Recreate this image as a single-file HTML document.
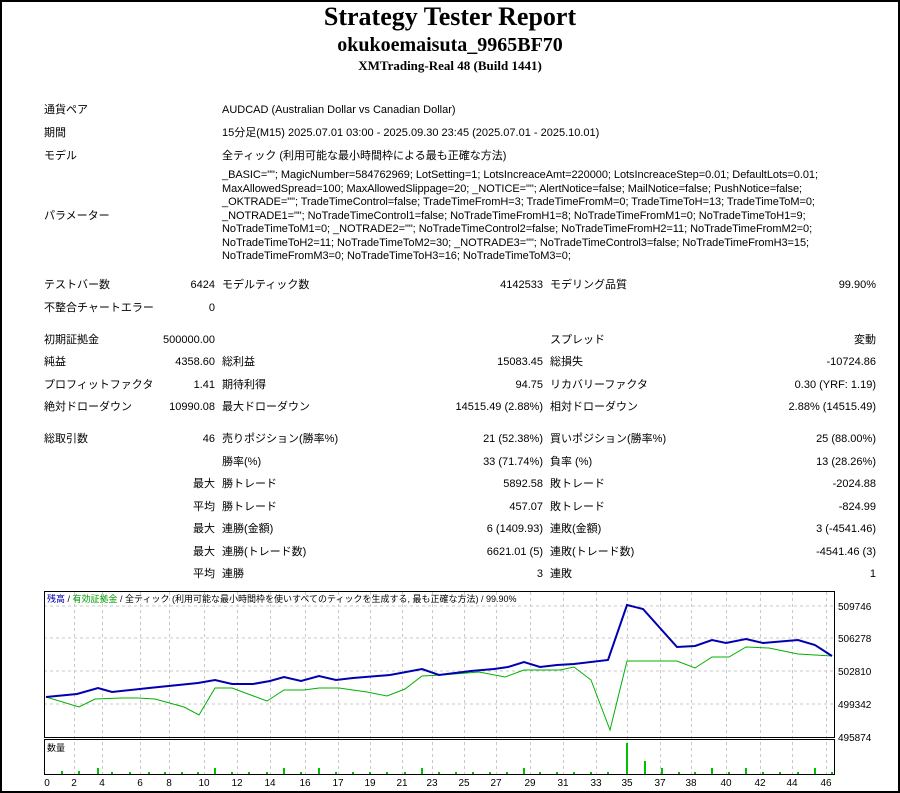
<!DOCTYPE html>
<html><head><meta charset="utf-8"><style>
*{margin:0;padding:0}
body{width:900px;height:793px;background:#fff;position:relative;overflow:hidden;font-family:"Liberation Sans","Noto Sans CJK JP",sans-serif;font-size:11px;color:#000}
#frame{position:absolute;left:0;top:0;width:896px;height:789px;border:2px solid #000}
.t{position:absolute;line-height:14px;white-space:nowrap}
.r{text-align:right}
.h{position:absolute;left:0;width:900px;text-align:center;font-family:"Liberation Serif",serif;font-weight:bold;white-space:nowrap}
</style></head><body>
<div id="frame"></div>
<div class="h" style="top:2px;font-size:26px;line-height:30px">Strategy Tester Report</div>
<div class="h" style="top:33px;font-size:20px;line-height:24px">okukoemaisuta_9965BF70</div>
<div class="h" style="top:58px;font-size:13px;line-height:15px">XMTrading-Real 48 (Build 1441)</div>

<div class="t" style="left:44px;top:103px">通貨ペア</div><div class="t" style="left:222px;top:103px">AUDCAD (Australian Dollar vs Canadian Dollar)</div>
<div class="t" style="left:44px;top:126px">期間</div><div class="t" style="left:222px;top:126px">15分足(M15) 2025.07.01 03:00 - 2025.09.30 23:45 (2025.07.01 - 2025.10.01)</div>
<div class="t" style="left:44px;top:149px">モデル</div><div class="t" style="left:222px;top:149px">全ティック (利用可能な最小時間枠による最も正確な方法)</div>
<div class="t" style="left:44px;top:209px">パラメーター</div>
<div class="t" style="left:222px;top:169px;line-height:13.5px;letter-spacing:-0.05px">_BASIC=""; MagicNumber=584762969; LotSetting=1; LotsIncreaceAmt=220000; LotsIncreaceStep=0.01; DefaultLots=0.01;<br>MaxAllowedSpread=100; MaxAllowedSlippage=20; _NOTICE=""; AlertNotice=false; MailNotice=false; PushNotice=false;<br>_OKTRADE=""; TradeTimeControl=false; TradeTimeFromH=3; TradeTimeFromM=0; TradeTimeToH=13; TradeTimeToM=0;<br>_NOTRADE1=""; NoTradeTimeControl1=false; NoTradeTimeFromH1=8; NoTradeTimeFromM1=0; NoTradeTimeToH1=9;<br>NoTradeTimeToM1=0; _NOTRADE2=""; NoTradeTimeControl2=false; NoTradeTimeFromH2=11; NoTradeTimeFromM2=0;<br>NoTradeTimeToH2=11; NoTradeTimeToM2=30; _NOTRADE3=""; NoTradeTimeControl3=false; NoTradeTimeFromH3=15;<br>NoTradeTimeFromM3=0; NoTradeTimeToH3=16; NoTradeTimeToM3=0;</div>

<div id="stats"></div>
<script>
var rows=[
[278,"テストバー数","6424","モデルティック数","4142533","モデリング品質","99.90%"],
[301,"不整合チャートエラー","0","","","",""],
[333,"初期証拠金","500000.00","","","スプレッド","変動"],
[355,"純益","4358.60","総利益","15083.45","総損失","-10724.86"],
[378,"プロフィットファクタ","1.41","期待利得","94.75","リカバリーファクタ","0.30 (YRF: 1.19)"],
[400,"絶対ドローダウン","10990.08","最大ドローダウン","14515.49 (2.88%)","相対ドローダウン","2.88% (14515.49)"],
[432,"総取引数","46","売りポジション(勝率%)","21 (52.38%)","買いポジション(勝率%)","25 (88.00%)"],
[455,"","","勝率(%)","33 (71.74%)","負率 (%)","13 (28.26%)"],
[477,"","最大","勝トレード","5892.58","敗トレード","-2024.88"],
[500,"","平均","勝トレード","457.07","敗トレード","-824.99"],
[522,"","最大","連勝(金額)","6 (1409.93)","連敗(金額)","3 (-4541.46)"],
[545,"","最大","連勝(トレード数)","6621.01 (5)","連敗(トレード数)","-4541.46 (3)"],
[567,"","平均","連勝","3","連敗","1"]];
var h="";
rows.forEach(function(r){var y=r[0];
h+='<div class="t" style="left:44px;top:'+y+'px">'+r[1]+'</div>';
h+='<div class="t r" style="left:100px;width:115px;top:'+y+'px">'+r[2]+'</div>';
h+='<div class="t" style="left:222px;top:'+y+'px">'+r[3]+'</div>';
h+='<div class="t r" style="left:400px;width:143px;top:'+y+'px">'+r[4]+'</div>';
h+='<div class="t" style="left:550px;top:'+y+'px">'+r[5]+'</div>';
h+='<div class="t r" style="left:700px;width:176px;top:'+y+'px">'+r[6]+'</div>';});
document.getElementById("stats").innerHTML=h;
</script>

<svg style="position:absolute;left:0;top:0" width="900" height="793">
<g stroke="#c8c8c8" stroke-dasharray="3,3" stroke-width="1">
<line x1="44" y1="606" x2="834" y2="606"/><line x1="44" y1="638" x2="834" y2="638"/><line x1="44" y1="671" x2="834" y2="671"/><line x1="44" y1="704" x2="834" y2="704"/>
<g id="vg"></g>
</g>
<rect x="44.5" y="591.5" width="790" height="146" fill="none" stroke="#000"/>
<rect x="44.5" y="739.5" width="790" height="35" fill="none" stroke="#000"/>
<polyline fill="none" stroke="#00b000" stroke-width="1" points="46,697 79,707 95,699 121,698 138,698 155,699 184,707 199,715 215,688 232,688 267,701 284,690 304,690 319,688 339,688 367,692 387,696 405,689 422,676 442,675 479,672 505,677 524,670 560,670 574,667 591,680 610,730 627,661 677,661 695,668 712,657 729,657 746,647 769,648 798,654 832,656"/>
<polyline fill="none" stroke="#0000b0" stroke-width="2" points="46,697 77,694 98,688 112,692 149,688 198,683 215,680 232,684 253,684 270,681 284,677 301,681 319,676 336,680 353,678 390,675 422,669 439,675 471,671 494,669 508,667 524,662 540,667 557,665 574,664 608,660 627,605 643,609 677,647 695,646 712,640 726,643 746,639 763,643 798,640 815,645 832,656"/>
<g fill="#00c000" id="vb"></g>
<g font-family="Liberation Sans,sans-serif" font-size="10" fill="#000">
<text x="838" y="610">509746</text><text x="838" y="642">506278</text><text x="838" y="675">502810</text><text x="838" y="708">499342</text><text x="838" y="741">495874</text>
<g id="xl" text-anchor="middle"></g>
</g>
<text x="47" y="602" font-size="9" font-family="Liberation Sans,Noto Sans CJK JP,sans-serif"><tspan fill="#0000b0">残高</tspan> / <tspan fill="#00a000">有効証拠金</tspan> / 全ティック (利用可能な最小時間枠を使いすべてのティックを生成する, 最も正確な方法) / 99.90%</text>
<text x="47" y="751" font-size="9" font-family="Liberation Sans,Noto Sans CJK JP,sans-serif">数量</text>
</svg>
<script>
var xs=[[0,47],[2,74],[4,102],[6,140],[8,169],[10,204],[12,237],[14,270],[16,305],[17,338],[19,370],[21,402],[23,432],[25,464],[27,496],[29,530],[31,563],[33,596],[35,627],[37,660],[38,691],[40,726],[42,760],[44,792],[46,826]];
var g="",l="";
xs.forEach(function(a){if(a[1]>50&&a[1]<830)g+='<line x1="'+(a[1]+0.5)+'" y1="592" x2="'+(a[1]+0.5)+'" y2="774"/>';l+='<text x="'+a[1]+'" y="786">'+a[0]+'</text>';});
document.getElementById("vg").innerHTML=g;document.getElementById("xl").innerHTML=l;
var vb=[[62,3],[79,3],[98,6],[112,2],[130,2],[149,2],[165,2],[182,2],[198,2],[215,6],[232,2],[249,2],[267,2],[284,6],[301,2],[319,6],[336,2],[353,2],[370,2],[387,2],[405,2],[422,6],[439,2],[456,2],[473,2],[490,2],[507,2],[524,6],[540,2],[557,2],[574,2],[591,2],[608,2],[627,31],[645,13],[662,6],[679,2],[695,2],[712,6],[729,2],[746,6],[763,2],[780,2],[798,2],[815,6],[832,2]];
var b="";vb.forEach(function(v){b+='<rect x="'+(v[0]-1)+'" y="'+(774-v[1])+'" width="2" height="'+v[1]+'"/>';});
document.getElementById("vb").innerHTML=b;
</script>
</body></html>
